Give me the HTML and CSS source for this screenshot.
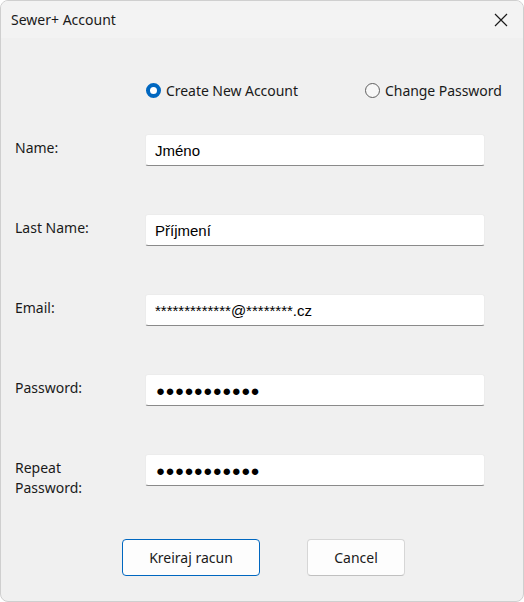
FILE: index.html
```html
<!DOCTYPE html>
<html>
<head>
<meta charset="utf-8">
<link rel="stylesheet" href="styles.css">
</head>
<body>
<div class="window">
  <div class="titlebar">
    <span class="title">Sewer+ Account</span>
    <svg class="close" width="14" height="14" viewBox="0 0 14 14"><path d="M1 1 L13 13 M13 1 L1 13" stroke="#1a1a1a" stroke-width="1.2" fill="none"/></svg>
  </div>
  <div class="content">
    <div class="radios">
      <label class="radio first"><span class="dot checked"></span>Create New Account</label>
      <label class="radio"><span class="dot"></span>Change Password</label>
    </div>
    <div class="form">
      <div class="label">Name:</div>
      <input class="field" type="text" value="Jméno">
      <div class="label">Last Name:</div>
      <input class="field" type="text" value="Příjmení">
      <div class="label">Email:</div>
      <input class="field" type="text" value="*************@********.cz">
      <div class="label">Password:</div>
      <input class="field pw" type="text" value="●●●●●●●●●●●">
      <div class="label">Repeat<br>Password:</div>
      <input class="field pw" type="text" value="●●●●●●●●●●●">
    </div>
    <div class="buttons">
      <button class="btn primary">Kreiraj racun</button>
      <button class="btn cancel">Cancel</button>
    </div>
  </div>
</div>
</body>
</html>
```
FILE: styles.css
```css
html, body {
  margin: 0;
  padding: 0;
  background: #ffffff;
}
.window {
  width: 524px;
  height: 602px;
  box-sizing: border-box;
  border: 1px solid #cfcfcf;
  border-radius: 8px;
  background: #f0f0f0;
  overflow: hidden;
  font-family: "Noto Sans", "Open Sans", sans-serif;
  color: #1a1a1a;
}
.titlebar {
  height: 37px;
  background: #f3f3f3;
  display: flex;
  align-items: center;
  justify-content: space-between;
  padding: 0 15px 0 10px;
}
.title {
  font-size: 14px;
}
.close {
  display: block;
}
.content {
  padding-top: 42px;
}
.radios {
  display: flex;
  align-items: center;
  padding-left: 145px;
  height: 20px;
}
.radio {
  display: flex;
  align-items: center;
  font-size: 14px;
  letter-spacing: -0.05px;
  gap: 5px;
}
.radio.first {
  width: 219px;
}
.dot {
  width: 15px;
  height: 15px;
  box-sizing: border-box;
  border-radius: 50%;
  border: 1px solid #5f5f5f;
  background: #f7f7f7;
}
.dot.checked {
  border: 4.5px solid #0067c0;
  background: #ffffff;
}
.form {
  display: grid;
  grid-template-columns: 130px 340px;
  row-gap: 48px;
  padding-left: 14px;
  margin-top: 34px;
}
.label {
  font-size: 14px;
  line-height: 20px;
  padding-top: 4px;
}
.field {
  height: 32px;
  box-sizing: border-box;
  border: 1px solid #ececec;
  border-bottom: 1px solid #8a8a8a;
  border-radius: 3px;
  background: #ffffff;
  font-family: "Liberation Sans", Arial, sans-serif;
  font-size: 15px;
  color: #000000;
  padding: 0 9px;
  margin: 0;
  outline: none;
}
.field.pw {
  letter-spacing: 0.4px;
  padding-left: 10px;
}
.buttons {
  display: flex;
  padding-left: 121px;
  gap: 47px;
  margin-top: 41px;
}
.btn {
  height: 37px;
  box-sizing: border-box;
  border-radius: 4px;
  background: #fdfdfd;
  font-family: "Noto Sans", "Open Sans", sans-serif;
  font-size: 14px;
  color: #1a1a1a;
  padding: 0;
}
.btn.primary {
  width: 138px;
  border: 1px solid #0067c0;
}
.btn.cancel {
  width: 98px;
  border: 1px solid #d6d6d6;
  border-bottom-color: #c0c0c0;
}
```
